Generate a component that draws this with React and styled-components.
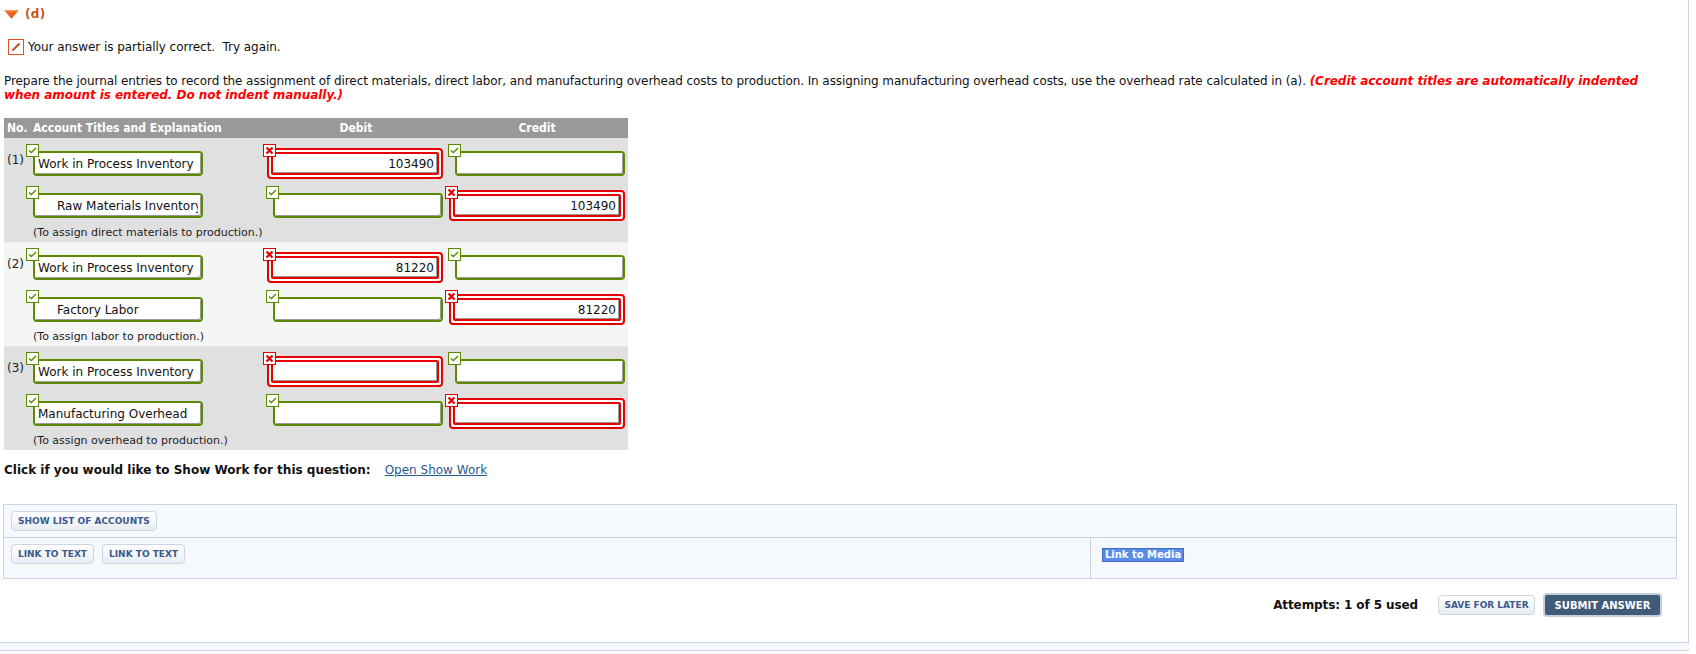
import React from "react";
import styled, { createGlobalStyle } from "styled-components";

const Global = createGlobalStyle`
  html, body { margin: 0; padding: 0; background: #fff; }
  body { font-family: "DejaVu Sans", Verdana, sans-serif; font-size: 12px; color: #111; overflow: hidden; }
`;
const Frame = styled.div`
  box-sizing: border-box; width: 1689px; height: 643px; border-right: 1px solid #ccd3e2; border-bottom: 1px solid #ccd3e2;
`;
const Band = styled.div`
  width: 1689px; height: 7px; background: #f5f8fc; border-bottom: 1px solid #ccd3e2;
`;
const Title = styled.div`
  display: flex; align-items: center; gap: 6px; height: 28px; padding-left: 4px;
  font-weight: bold; font-size: 12px; letter-spacing: 0.3px; color: #c8541c;
`;
const Feedback = styled.div`
  display: flex; align-items: center; gap: 4px; height: 18px; margin: 10px 0 0 8px; letter-spacing: -0.05px;
`;
const FeedbackIcon = styled.span`
  box-sizing: border-box; display: flex; align-items: center; justify-content: center;
  width: 16px; height: 16px; border: 1px solid #d9541e; background: #fff;
`;
const Prompt = styled.p`
  margin: 18px 8px 0 4px; line-height: 14px; width: 1660px; letter-spacing: -0.08px;
`;
const Hint = styled.em`
  color: #f00; font-weight: bold; font-style: italic; letter-spacing: -0.05px;
`;
const Table = styled.div`
  width: 624px; margin: 16px 0 0 4px;
`;
const Head = styled.div`
  display: grid; grid-template-columns: 29px 170px 240px 182px 3px; height: 20px; align-items: center;
  background: #999; color: #fff; font-family: "DejaVu Sans Condensed", "DejaVu Sans", sans-serif; font-weight: bold; font-size: 12px;
`;
const HeadNo = styled.span`padding-left: 3px;`;
const HeadCell = styled.span`
  white-space: nowrap; text-align: ${p => p.$center ? "center" : "left"}; padding-left: ${p => p.$pad || 0}px;
`;
const Row = styled.div`
  height: 104px; box-sizing: border-box; padding-top: 4px; background: ${p => p.$alt ? "#f5f5f5" : "#e0e0e0"};
`;
const Line = styled.div`
  display: grid; grid-template-columns: 29px 170px 240px 182px 3px; height: 42px; align-items: center;
`;
const No = styled.span`
  align-self: start; padding: 11px 0 0 3px; font-size: 12px; color: #222;
`;
const Field = styled.span`
  position: relative; display: block; justify-self: end;
  box-sizing: border-box; width: ${p => p.$bad ? 176 : 170}px; height: ${p => p.$bad ? 31 : 25}px;
  border-radius: 4px; border: 2px solid ${p => p.$bad ? "#e60000" : "#5b8a00"}; background: #fff;
  ${p => p.$bad ? "padding: 2px;" : ""}
`;
const Input = styled.input`
  display: block; box-sizing: border-box; width: 100%; height: 100%; margin: 0; outline: none;
  font: 12px "DejaVu Sans", Verdana, sans-serif; color: #111; background: #fff;
  text-align: ${p => p.$num ? "right" : "left"};
  padding: 2px 3px 0 ${p => p.$indent ? 22 : 3}px;
  border: 0; border-radius: 2px;
  ${p => p.$bad ? "border: 2px solid #e60000; box-shadow: inset -1px -1px 0 #999;" : "box-shadow: inset -1px -1px 0 #999;"}
`;
const Badge = styled.span`
  position: absolute; box-sizing: border-box; display: flex; align-items: center; justify-content: center;
  left: ${p => p.$bad ? -6 : -9}px; top: ${p => p.$bad ? -6 : -9}px; width: 13px; height: 13px;
  border: 1px solid ${p => p.$bad ? "#e60000" : "#5b8a00"}; background: #fff;
`;
const Note = styled.div`
  margin-left: 29px; height: 16px; line-height: 14px; color: #222; font-size: 11px; white-space: nowrap;
`;
const ShowWork = styled.div`
  display: flex; align-items: center; margin: 12px 0 0 4px; height: 16px; font-weight: bold; color: #111;
`;
const OpenLink = styled.a`
  margin-left: 14px; font-weight: normal; color: #2a5a8c; text-decoration: underline;
`;
const Panel = styled.div`
  box-sizing: border-box; width: 1674px; margin: 26px 0 0 3px; background: #f5f8fc; border: 1px solid #ccd3e2; height: 75px;
`;
const PanelTop = styled.div`
  box-sizing: border-box; display: flex; height: 33px; padding: 6px 7px; border-bottom: 1px solid #ccd3e2;
`;
const PanelBottom = styled.div`
  display: grid; grid-template-columns: 1086px 1fr; height: 40px;
`;
const LinkCell = styled.div`
  box-sizing: border-box; display: flex; gap: 8px; padding: 6px 7px; align-items: flex-start;
`;
const MediaCell = styled.div`
  box-sizing: border-box; border-left: 1px solid #ccd3e2; padding: 9px 11px;
`;
const Ghost = styled.button`
  box-sizing: border-box; height: 20px; padding: 0 6px; border: 1px solid #ccd5e4; border-radius: 4px;
  background: linear-gradient(#fff, #e8ecf3); color: #3a5a8c; font: bold 9px "DejaVu Sans", sans-serif; white-space: nowrap;
`;
const Media = styled.span`
  display: inline-block; box-sizing: border-box; width: 82px; height: 14px; line-height: 12px; text-align: center;
  background: #5b8de8; border: 1px solid #3f6ec8; color: #fff; font-size: 10px; font-weight: bold; white-space: nowrap;
`;
const Footer = styled.div`
  display: flex; justify-content: flex-end; align-items: center; margin-top: 14px; padding-right: 26px; height: 24px;
`;
const Attempts = styled.span`
  font-weight: bold; margin-right: 20px; color: #111; letter-spacing: -0.1px;
`;
const Save = styled(Ghost)`margin-right: 8px; width: 97px; padding: 0;`;
const Submit = styled.button`
  box-sizing: border-box; width: 119px; height: 24px; padding: 0; border: 2px solid #c5cedb; border-radius: 4px;
  background: #3f5b78; color: #fff; font: bold 10px "DejaVu Sans", sans-serif;
`;

const Check = () => <svg width="9" height="7" viewBox="0 0 9 7"><path d="M1 3.5 L3.4 5.6 L8 1" fill="none" stroke="#5b8a00" strokeWidth="1.4" /></svg>;
const Cross = () => <svg width="9" height="9" viewBox="0 0 9 9"><path d="M1.5 1.5 L7.5 7.5 M7.5 1.5 L1.5 7.5" fill="none" stroke="#e60000" strokeWidth="2.2" /></svg>;

const Cell = ({ bad, value, num, indent, col }) => (
  <Field $bad={bad} style={{ gridColumn: col }}>
    <Badge $bad={bad}>{bad ? <Cross /> : <Check />}</Badge>
    <Input readOnly value={value || ""} $bad={bad} $num={num} $indent={indent} />
  </Field>
);

const entries = [
  { no: "(1)", a: "Work in Process Inventory", b: "Raw Materials Inventory", bi: true, d: "103490", c: "103490", note: "(To assign direct materials to production.)" },
  { no: "(2)", a: "Work in Process Inventory", b: "Factory Labor", bi: true, d: "81220", c: "81220", note: "(To assign labor to production.)", alt: true },
  { no: "(3)", a: "Work in Process Inventory", b: "Manufacturing Overhead", bi: false, d: "", c: "", note: "(To assign overhead to production.)" },
];

export default function App() {
  return (
    <>
      <Global />
      <Frame>
        <Title>
          <svg width="15" height="9" viewBox="0 0 15 9"><defs><linearGradient id="g" x1="0" y1="0" x2="0" y2="1"><stop offset="0" stopColor="#f4a060" /><stop offset="0.3" stopColor="#e8641c" /><stop offset="1" stopColor="#e8641c" /></linearGradient></defs><path d="M0 0 H15 L7.5 9 Z" fill="url(#g)" /></svg>
          <span>(d)</span>
        </Title>
        <Feedback>
          <FeedbackIcon><svg width="10" height="10" viewBox="0 0 10 10"><path d="M1.5 8.5 L8.5 1.5" stroke="#c8501e" strokeWidth="2" fill="none" /></svg></FeedbackIcon>
          <span>Your answer is partially correct.&nbsp; Try again.</span>
        </Feedback>
        <Prompt>
          Prepare the journal entries to record the assignment of direct materials, direct labor, and manufacturing overhead costs to production. In assigning manufacturing overhead costs, use the overhead rate calculated in (a). <Hint>(Credit account titles are automatically indented when amount is entered. Do not indent manually.)</Hint>
        </Prompt>
        <Table>
          <Head>
            <HeadNo>No.</HeadNo>
            <HeadCell>Account Titles and Explanation</HeadCell>
            <HeadCell $center $pad={66}>Debit</HeadCell>
            <HeadCell $center $pad={6}>Credit</HeadCell>
          </Head>
          {entries.map(e => (
            <Row key={e.no} $alt={e.alt}>
              <Line>
                <No>{e.no}</No>
                <Cell value={e.a} />
                <Cell bad value={e.d} num />
                <Cell />
              </Line>
              <Line>
                <Cell col={2} value={e.b} indent={e.bi} />
                <Cell />
                <Cell bad value={e.c} num />
              </Line>
              <Note>{e.note}</Note>
            </Row>
          ))}
        </Table>
        <ShowWork>
          <span>Click if you would like to Show Work for this question:</span>
          <OpenLink>Open Show Work</OpenLink>
        </ShowWork>
        <Panel>
          <PanelTop><Ghost>SHOW LIST OF ACCOUNTS</Ghost></PanelTop>
          <PanelBottom>
            <LinkCell><Ghost>LINK TO TEXT</Ghost><Ghost>LINK TO TEXT</Ghost></LinkCell>
            <MediaCell><Media>Link to Media</Media></MediaCell>
          </PanelBottom>
        </Panel>
        <Footer>
          <Attempts>Attempts: 1 of 5 used</Attempts>
          <Save>SAVE FOR LATER</Save>
          <Submit>SUBMIT ANSWER</Submit>
        </Footer>
      </Frame>
      <Band />
    </>
  );
}
